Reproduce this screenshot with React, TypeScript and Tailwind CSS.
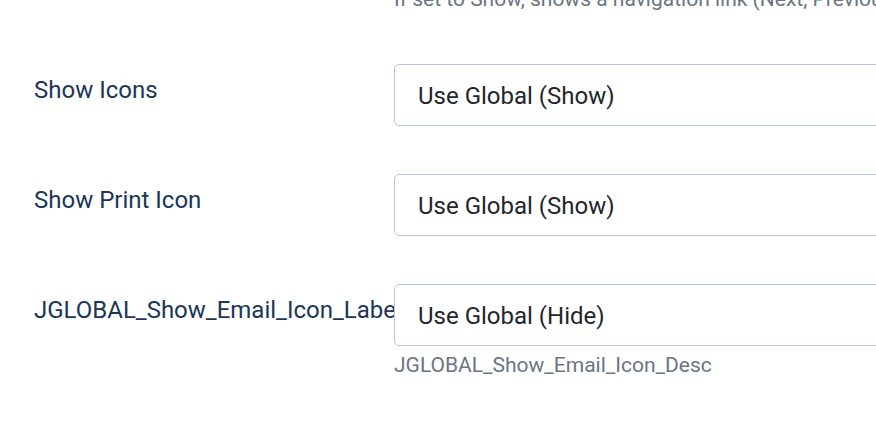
import React from "react";

type Row = { label: string; value: string; desc?: string };

const rows: Row[] = [
  { label: "Show Icons", value: "Use Global (Show)" },
  { label: "Show Print Icon", value: "Use Global (Show)" },
  {
    label: "JGLOBAL_Show_Email_Icon_Label",
    value: "Use Global (Hide)",
    desc: "JGLOBAL_Show_Email_Icon_Desc",
  },
];

export default function App() {
  return (
    <div
      className="w-[876px] h-[427px] overflow-hidden bg-white"
      style={{ fontFamily: "Roboto, 'Noto Sans', sans-serif" }}
    >
      <div className="flex flex-col pl-[34px]">
        <div className="flex -mt-[16px] mb-[48px]">
          <div className="w-[360px] shrink-0" />
          <div className="text-[21px] leading-[31.5px] text-[#6b7583] whitespace-nowrap">
            If set to Show, shows a navigation link (Next, Previous) between articles.
          </div>
        </div>
        {rows.map((r) => (
          <div key={r.label} className="flex mb-[48px]">
            <div className="w-[360px] shrink-0 pt-[8px]">
              <div className="text-[24px] leading-[36px] text-[#1b3657] whitespace-nowrap">
                {r.label}
              </div>
            </div>
            <div className="relative z-10 flex flex-col">
              <div className="w-[560px] h-[62px] bg-white border border-[#b7c6df] rounded-[5px] pl-[23px] pt-[13px] pb-[11px] text-[24px] leading-[36px] text-[#22262a] whitespace-nowrap">
                {r.value}
              </div>
              {r.desc && (
                <div className="mt-[4px] text-[21px] leading-[31.5px] text-[#6b7583] whitespace-nowrap">
                  {r.desc}
                </div>
              )}
            </div>
          </div>
        ))}
      </div>
    </div>
  );
}
